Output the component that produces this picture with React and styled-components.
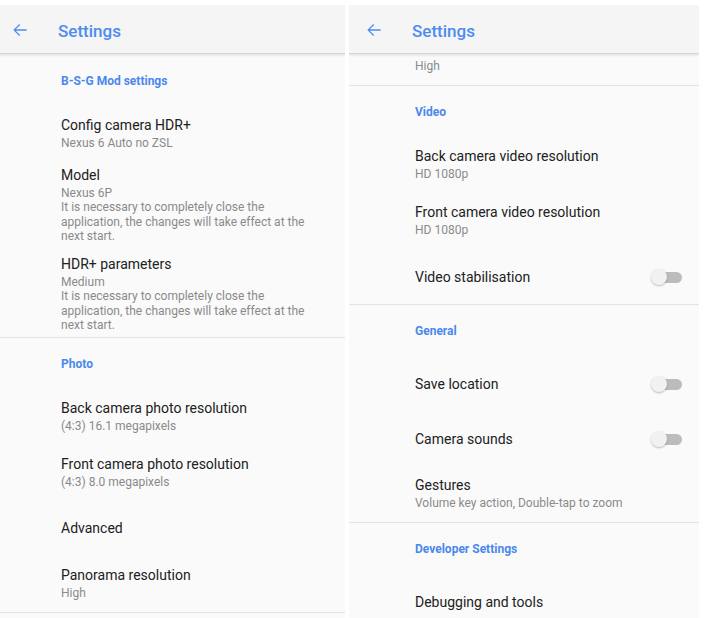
import styled, { createGlobalStyle } from "styled-components";

const GlobalStyle = createGlobalStyle`
    html, body {
        margin: 0;
        padding: 0;
        background: #ffffff;
        overflow: hidden;
    }
    body {
        font-family: Roboto, "Noto Sans", "Liberation Sans", sans-serif;
    }
`

const restartNote = [
    "It is necessary to completely close the",
    "application, the changes will take effect at the",
    "next start.",
]

// left screen: top of the list
const firstPage = [
    {
        name: "B-S-G Mod settings",
        items: [
            { title: "Config camera HDR+", summary: ["Nexus 6 Auto no ZSL"], pt: 9, pb: 6 },
            { title: "Model", summary: ["Nexus 6P", ...restartNote], pt: 8, pb: 2 },
            { title: "HDR+ parameters", summary: ["Medium", ...restartNote], pt: 8, pb: 4 },
        ],
    },
    {
        name: "Photo",
        items: [
            { title: "Back camera photo resolution", summary: ["(4:3) 16.1 megapixels"] },
            { title: "Front camera photo resolution", summary: ["(4:3) 8.0 megapixels"] },
            { title: "Advanced" },
            { title: "Panorama resolution", summary: ["High"] },
        ],
    },
]

// right screen: the same list scrolled down
const secondPage = [
    {
        items: [{ title: "Panorama resolution", summary: ["High"] }],
    },
    {
        name: "Video",
        items: [
            { title: "Back camera video resolution", summary: ["HD 1080p"] },
            { title: "Front camera video resolution", summary: ["HD 1080p"] },
            { title: "Video stabilisation", toggle: true },
        ],
    },
    {
        name: "General",
        items: [
            { title: "Save location", toggle: true },
            { title: "Camera sounds", toggle: true },
            { title: "Gestures", summary: ["Volume key action, Double-tap to zoom"] },
        ],
    },
    {
        name: "Developer Settings",
        items: [{ title: "Debugging and tools" }],
        last: true,
    },
]

const BackArrow = () => (
    <svg width="20" height="20" viewBox="0 0 24 24" fill="#4d8cf0">
        <path d="M20 11.2H6.9l5.3-5.3-1.1-1.1L4 12l7.1 7.2 1.1-1.1-5.3-5.3H20z" />
    </svg>
)

const SettingsList = ({ sections }) => (
    <>
        {sections.map((section, i) => (
            <Section key={i} $last={section.last}>
                {section.name && <Category>{section.name}</Category>}
                {section.items.map((item) => (
                    <Row
                        key={item.title}
                        $single={!item.summary}
                        $pt={item.pt}
                        $pb={item.pb}
                    >
                        <Texts>
                            <Title>{item.title}</Title>
                            {item.summary && item.summary.map((line) => (
                                <Summary key={line}>{line}</Summary>
                            ))}
                        </Texts>
                        {item.toggle && (
                            <Switch>
                                <Track />
                                <Thumb />
                            </Switch>
                        )}
                    </Row>
                ))}
            </Section>
        ))}
    </>
)

const Screen = ({ sections, scroll }) => (
    <Panel>
        <AppBar>
            <IconButton><BackArrow /></IconButton>
            <BarTitle>Settings</BarTitle>
        </AppBar>
        <Body>
            <List $scroll={scroll}>
                <SettingsList sections={sections} />
            </List>
        </Body>
    </Panel>
)

const App = () => {
    return (
        <>
            <GlobalStyle />
            <Screens>
                <Screen sections={firstPage} scroll={-2} />
                <Screen sections={secondPage} scroll={24} />
            </Screens>
        </>
    )
}

const Screens = styled.div`
    display: flex;
    gap: 4px;
    margin-left: -5px;
    padding-top: 5px;
    height: 613px;
`

const Panel = styled.div`
    display: flex;
    flex-direction: column;
    width: 350px;
    height: 100%;
    background: #fafafa;
    overflow: hidden;
`

const AppBar = styled.div`
    position: relative;
    z-index: 2;
    display: flex;
    align-items: center;
    height: 48px;
    flex-shrink: 0;
    background: #f5f5f5;
    box-shadow: 0 1px 0 #d6d6d6, 0 2px 3px rgba(0,0,0,0.12);
`

const IconButton = styled.div`
    display: flex;
    align-items: center;
    width: 20px;
    height: 20px;
    margin: 2px 28px 0 15px;
`

const BarTitle = styled.div`
    font-size: 17px;
    font-weight: 500;
    color: #4d8cf0;
    margin-top: 3px;
`

const Body = styled.div`
    flex: 1;
    overflow: hidden;
`

const List = styled.div`
    margin-top: ${p => -p.$scroll}px;
`

const Section = styled.div`
    border-bottom: ${p => p.$last ? "none" : "1px solid #e3e3e3"};
`

const Category = styled.div`
    display: flex;
    align-items: center;
    box-sizing: border-box;
    height: 51px;
    padding: 1px 0 0 66px;
    font-size: 12px;
    font-weight: 700;
    color: #4a88ee;
`

const Row = styled.div`
    display: flex;
    align-items: center;
    box-sizing: border-box;
    padding: ${p => p.$single
        ? "1px 17px 0 66px"
        : `${p.$pt ?? 9}px 17px ${p.$pb ?? 11.5}px 66px`};
    min-height: ${p => p.$single ? "55px" : "auto"};
`

const Texts = styled.div`
    flex: 1;
    display: flex;
    flex-direction: column;
`

const Title = styled.div`
    font-size: 14px;
    line-height: 21px;
    color: #212121;
    white-space: nowrap;
`

const Summary = styled.div`
    font-size: 12px;
    line-height: 14.5px;
    color: #8a8a8a;
    white-space: nowrap;
`

const Switch = styled.div`
    position: relative;
    width: 31px;
    height: 18px;
`

const Track = styled.div`
    position: absolute;
    right: 0;
    top: 3.5px;
    width: 27px;
    height: 11px;
    border-radius: 6px;
    background: #bcbcbc;
`

const Thumb = styled.div`
    position: absolute;
    left: 0;
    top: 1px;
    width: 16px;
    height: 16px;
    border-radius: 50%;
    background: #f1f1f1;
    box-shadow: 0 1px 2px rgba(0,0,0,0.25);
`

export default App;
